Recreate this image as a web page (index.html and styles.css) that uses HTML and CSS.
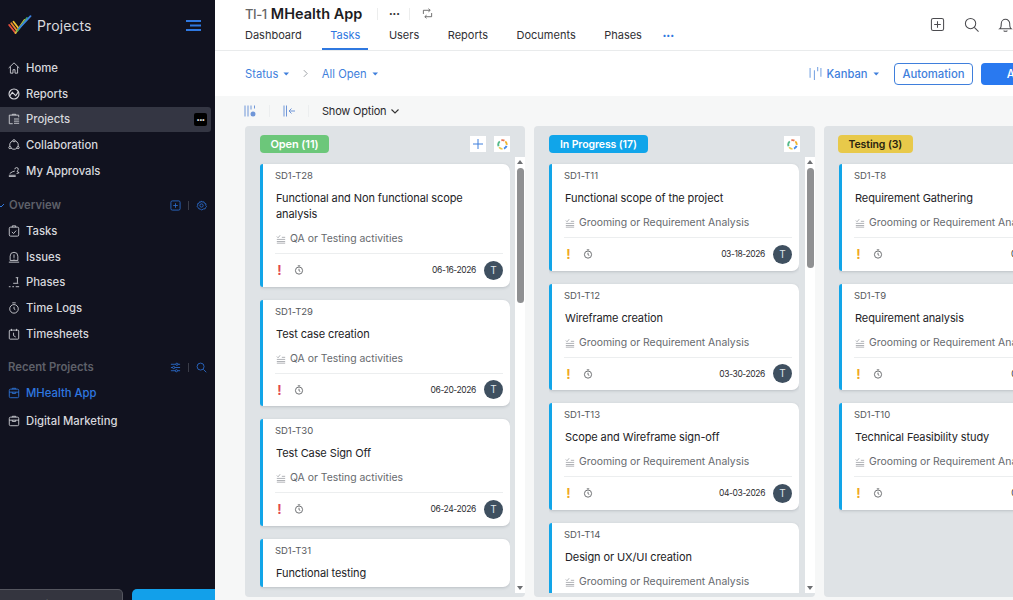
FILE: index.html
```html
<!DOCTYPE html>
<html lang="en">
<head>
<meta charset="utf-8">
<title>Projects - MHealth App</title>
<link rel="stylesheet" href="styles.css">
</head>
<body>
<svg class="sprite" width="0" height="0" aria-hidden="true">
  <symbol id="i-cat" viewBox="0 0 12 12"><path d="M1 6.500h10M1 9h10M1 11h10M1 3l1.500 1.500L5 1.500M7 4h4" fill="none" stroke="currentColor" stroke-width=".8"/></symbol>
  <symbol id="i-watch" viewBox="0 0 12 12"><circle cx="6" cy="6.700" r="4.300" fill="none" stroke="currentColor" stroke-width="1"/><path d="M4.500 1h3M6 4.500v2.400l1.500 .8" fill="none" stroke="currentColor" stroke-width="1"/></symbol>
  <symbol id="i-caret" viewBox="0 0 8 5"><path d="M0.500 .5h7L4 4.500z" fill="currentColor"/></symbol>
  <symbol id="i-ring" viewBox="0 0 14 14" fill="none" stroke-width="2.400">
    <path d="M5.500 1.700A5.500 5.500 0 0 1 9.500 2" stroke="#e8734f"/><path d="M10.600 3A5.500 5.500 0 0 1 12.400 7.500" stroke="#f0b429"/><path d="M12.200 8.800A5.500 5.500 0 0 1 8.800 12.200" stroke="#4a8de8"/><path d="M7 12.500A5.500 5.500 0 0 1 2.700 10.500" stroke="#e8c84a"/><path d="M2 9.200A5.500 5.500 0 0 1 3.500 3" stroke="#55b98a"/>
  </symbol>
</svg>
<div class="app">
  <aside class="sidebar">
    <div class="brand">
      <svg class="logo" viewBox="0 0 24 20" fill="none" stroke-width="1.800" stroke-linecap="round">
        <path d="M1.200 10l6.300 8" stroke="#e8503f"/><path d="M3.300 8.300l5.700 7.400" stroke="#ef8a2c"/><path d="M5.500 6.700l5 6.500" stroke="#f2c230"/>
        <path d="M7.500 18L16.500 5" stroke="#d9b93a"/><path d="M9.300 16L19 3" stroke="#46a95c"/><path d="M11 13.500L22.500 1.200" stroke="#3b82e0"/>
      </svg>
      <span class="brand-name">Projects</span>
      <svg class="menu-toggle" viewBox="0 0 15 11"><path d="M0 1h15M4 5.500h11M0 10h15" stroke="#2f78e0" stroke-width="2"/></svg>
    </div>
    <nav class="nav nav-main">
      <a class="nav-item"><svg class="nav-icon" viewBox="0 0 14 14"><path d="M.8 7L7 1l6.200 6M2.800 5.500v7.500h3V9h2.400v4h3V5.500" /></svg>Home</a>
      <a class="nav-item"><svg class="nav-icon" viewBox="0 0 14 14"><circle cx="7" cy="7" r="5.800" stroke-width="1.300"/><path d="M2 9.500l3-4.500 4 4 3-4.500" stroke-width="1.300"/></svg>Reports</a>
      <a class="nav-item is-current"><svg class="nav-icon" viewBox="0 0 14 14"><path d="M5 2.500V1.500h4v1M12.500 5V2.500h-11v10h4M7 7h6M7 9.500h6M7 12h6"/></svg>Projects<span class="more-badge">•••</span></a>
      <a class="nav-item"><svg class="nav-icon" viewBox="0 0 14 14"><circle cx="7" cy="7" r="5"/><circle cx="7" cy="2" r="1.300" class="dot"/><circle cx="2.200" cy="10" r="1.300" class="dot"/><circle cx="11.800" cy="10" r="1.300" class="dot"/></svg>Collaboration</a>
      <a class="nav-item"><svg class="nav-icon" viewBox="0 0 14 14"><path d="M1 12h8M1 13.500h8M2 10l3-2 3-1M8 5a2 2 0 1 1 4 0c0 1-1 1.500-1.500 2.500L13 9l-3 1"/></svg>My Approvals</a>
    </nav>
    <div class="section-head section-overview">
      <svg class="section-chevron" viewBox="0 0 6 6"><path d="M0 4l1 1 3-3" stroke="#2f78e0" fill="none" stroke-width="1"/></svg>
      <span class="section-title">Overview</span>
      <span class="section-tools">
        <svg class="tool-icon" viewBox="0 0 12 12"><rect x="1" y="1" width="10" height="10" rx="1.500"/><path d="M6 3.500v5M3.500 6h5"/></svg>
        <i class="tool-sep"></i>
        <svg class="tool-icon" viewBox="0 0 12 12"><circle cx="6" cy="6" r="1.800"/><path d="M6 1l1 1.300 1.700-.3.600 1.600 1.600.6-.3 1.800 1 1-1 1.100-.6 1.500-1.700.1L6 11l-1.200-1.200-1.600-.1-.7-1.500L1 7l1-1.200-.3-1.700 1.600-.6.600-1.500 1.700.3z"/></svg>
      </span>
    </div>
    <nav class="nav">
      <a class="nav-item"><svg class="nav-icon" viewBox="0 0 14 14"><rect x="1.500" y="2.500" width="11" height="10.500" rx="1.500"/><path d="M5 2.500V1h4v1.500M4.500 8l2 2 3-3.500"/></svg>Tasks</a>
      <a class="nav-item"><svg class="nav-icon" viewBox="0 0 14 14"><path d="M1 13h12M2.500 11V6a4.500 4.500 0 0 1 9 0v5zM7 4v4M7 9v1"/></svg>Issues</a>
      <a class="nav-item"><svg class="nav-icon" viewBox="0 0 14 14"><path d="M1 12.500h2M5 12.500h2M9 12.500h4M6 8.500h6M11 8V2M9 2h3"/></svg>Phases</a>
      <a class="nav-item"><svg class="nav-icon" viewBox="0 0 14 14"><circle cx="7" cy="8" r="5"/><path d="M5 1h4M7 5.500V8l1.500 1"/></svg>Time Logs</a>
      <a class="nav-item"><svg class="nav-icon" viewBox="0 0 14 14"><rect x="1.500" y="2.500" width="11" height="10.500" rx="1"/><path d="M4 1v2.500M10 1v2.500M6.500 5.500V9l2.500 1.500"/></svg>Timesheets</a>
    </nav>
    <div class="section-head section-recent">
      <span class="section-title">Recent Projects</span>
      <span class="section-tools">
        <svg class="tool-icon" viewBox="0 0 12 12"><path d="M1 2.500h10M1 6h10M1 9.500h10"/><circle cx="7.500" cy="2.500" r="1.200" class="tool-knob"/><circle cx="4" cy="6" r="1.200" class="tool-knob"/><circle cx="7" cy="9.500" r="1.200" class="tool-knob"/></svg>
        <i class="tool-sep"></i>
        <svg class="tool-icon" viewBox="0 0 12 12"><circle cx="5" cy="5" r="3.800"/><path d="M8 8l3.200 3.200"/></svg>
      </span>
    </div>
    <nav class="nav">
      <a class="nav-item is-active"><svg class="nav-icon" viewBox="0 0 14 14"><rect x="1.500" y="2.500" width="11" height="10" rx="1.500"/><path d="M1.500 6h11M5 6v1.500h4V6M5 2.500V1.500h4v1"/></svg>MHealth App</a>
      <a class="nav-item nav-item-last"><svg class="nav-icon" viewBox="0 0 14 14"><rect x="1.500" y="2.500" width="11" height="10" rx="1.500"/><path d="M1.500 6h11M5 6v1.500h4V6M5 2.500V1.500h4v1"/></svg>Digital Marketing</a>
    </nav>
    <div class="side-foot">
      <div class="foot-btn foot-btn-ghost">Invite Users</div>
      <div class="foot-btn foot-btn-primary">Upgrade</div>
    </div>
  </aside>

  <main class="main">
    <header class="topbar">
      <div class="topbar-left">
        <div class="title-row">
          <span class="proj-key">TI-1</span>
          <span class="proj-name">MHealth App</span>
          <i class="title-sep"></i>
          <span class="title-dots">•••</span>
          <i class="title-sep"></i>
          <svg class="title-sync" viewBox="0 0 12 12"><path d="M1.500 6.500V2.500h7M7 .8l2 1.700-2 1.700M10.500 5.500v4h-7M5 7.800l-2 1.700 2 1.700"/></svg>
        </div>
        <div class="tabs">
          <a class="tab">Dashboard</a>
          <a class="tab is-current">Tasks</a>
          <a class="tab">Users</a>
          <a class="tab">Reports</a>
          <a class="tab">Documents</a>
          <a class="tab">Phases</a>
          <span class="tab-more">•••</span>
        </div>
      </div>
      <div class="top-actions">
        <svg class="top-icon" viewBox="0 0 16 16"><rect x="1.500" y="1.500" width="13" height="13" rx="2"/><path d="M8 4.500v7M4.500 8h7"/></svg>
        <svg class="top-icon" viewBox="0 0 16 16"><circle cx="7" cy="7" r="5.500"/><path d="M11 11l4.500 4.500"/></svg>
        <svg class="top-icon" viewBox="0 0 16 16"><path d="M2 12.500c1.500-1 1.500-2.500 1.500-5.500a4.500 4.500 0 0 1 9 0c0 3 0 4.500 1.500 5.500zM6 14.500c1 1 3 1 4 0"/></svg>
      </div>
    </header>

    <div class="toolbar">
      <a class="filter">Status<svg class="caret"><use href="#i-caret"/></svg></a>
      <svg class="crumb" viewBox="0 0 6 10"><path d="M1 1l4 4-4 4" fill="none" stroke="#8b9096" stroke-width="1"/></svg>
      <a class="filter">All Open<svg class="caret"><use href="#i-caret"/></svg></a>
      <div class="toolbar-right">
        <a class="filter filter-view"><svg class="view-icon" viewBox="0 0 12 12"><path d="M1 1v9M5 3v9M8 0v4M11 1v8"/></svg>Kanban<svg class="caret"><use href="#i-caret"/></svg></a>
        <a class="btn btn-outline">Automation</a>
        <a class="btn btn-solid">Add Task</a>
      </div>
    </div>

    <div class="subbar">
      <svg class="sub-icon" viewBox="0 0 12 12"><path d="M1 .5v11M4 .5v11M7 .5v4M10.500 .5v3"/><circle cx="9" cy="9" r="2.500" class="sub-dot"/></svg>
      <i class="sub-sep"></i>
      <svg class="sub-icon" viewBox="0 0 12 12"><path d="M1 .5v11M3.500 .5v11M12 6H6M8.500 3.500L6 6l2.500 2.500"/></svg>
      <i class="sub-sep"></i>
      <a class="show-option">Show Option<svg class="chev" viewBox="0 0 8 5"><path d="M.5 .5L4 4l3.500-3.500" fill="none" stroke="#333" stroke-width="1.100"/></svg></a>
    </div>

    <section class="board">
      <div class="column">
        <div class="col-head">
          <span class="pill pill-open">Open (11)</span>
          <span class="col-tools">
            <span class="col-tool"><svg class="plus" viewBox="0 0 10 10"><path d="M5 0v10M0 5h10" stroke="#3f7fdc" stroke-width="1"/></svg></span>
            <span class="col-tool"><svg class="ring"><use href="#i-ring"/></svg></span>
          </span>
        </div>
        <div class="col-body">
          <div class="cards">
            <article class="card">
              <div class="card-id">SD1-T28</div>
              <h3 class="card-title">Functional and Non functional scope analysis</h3>
              <div class="card-cat"><svg class="cat-icon"><use href="#i-cat"/></svg>QA or Testing activities</div>
              <div class="card-foot"><span class="prio prio-high">!</span><svg class="watch"><use href="#i-watch"/></svg><span class="date">06-16-2026</span><span class="avatar">T</span></div>
            </article>
            <article class="card">
              <div class="card-id">SD1-T29</div>
              <h3 class="card-title">Test case creation</h3>
              <div class="card-cat"><svg class="cat-icon"><use href="#i-cat"/></svg>QA or Testing activities</div>
              <div class="card-foot"><span class="prio prio-high">!</span><svg class="watch"><use href="#i-watch"/></svg><span class="date">06-20-2026</span><span class="avatar">T</span></div>
            </article>
            <article class="card">
              <div class="card-id">SD1-T30</div>
              <h3 class="card-title">Test Case Sign Off</h3>
              <div class="card-cat"><svg class="cat-icon"><use href="#i-cat"/></svg>QA or Testing activities</div>
              <div class="card-foot"><span class="prio prio-high">!</span><svg class="watch"><use href="#i-watch"/></svg><span class="date">06-24-2026</span><span class="avatar">T</span></div>
            </article>
            <article class="card">
              <div class="card-id">SD1-T31</div>
              <h3 class="card-title">Functional testing</h3>
            </article>
          </div>
          <div class="scroll"><i class="arrow-up"></i><i class="thumb thumb-long"></i><i class="arrow-down"></i></div>
        </div>
      </div>

      <div class="column column-wide">
        <div class="col-head">
          <span class="pill pill-progress">In Progress (17)</span>
          <span class="col-tools">
            <span class="col-tool"><svg class="ring"><use href="#i-ring"/></svg></span>
          </span>
        </div>
        <div class="col-body">
          <div class="cards">
            <article class="card">
              <div class="card-id">SD1-T11</div>
              <h3 class="card-title">Functional scope of the project</h3>
              <div class="card-cat"><svg class="cat-icon"><use href="#i-cat"/></svg>Grooming or Requirement Analysis</div>
              <div class="card-foot"><span class="prio prio-mid">!</span><svg class="watch"><use href="#i-watch"/></svg><span class="date">03-18-2026</span><span class="avatar">T</span></div>
            </article>
            <article class="card">
              <div class="card-id">SD1-T12</div>
              <h3 class="card-title">Wireframe creation</h3>
              <div class="card-cat"><svg class="cat-icon"><use href="#i-cat"/></svg>Grooming or Requirement Analysis</div>
              <div class="card-foot"><span class="prio prio-mid">!</span><svg class="watch"><use href="#i-watch"/></svg><span class="date">03-30-2026</span><span class="avatar">T</span></div>
            </article>
            <article class="card">
              <div class="card-id">SD1-T13</div>
              <h3 class="card-title">Scope and Wireframe sign-off</h3>
              <div class="card-cat"><svg class="cat-icon"><use href="#i-cat"/></svg>Grooming or Requirement Analysis</div>
              <div class="card-foot"><span class="prio prio-mid">!</span><svg class="watch"><use href="#i-watch"/></svg><span class="date">04-03-2026</span><span class="avatar">T</span></div>
            </article>
            <article class="card">
              <div class="card-id">SD1-T14</div>
              <h3 class="card-title">Design or UX/UI creation</h3>
              <div class="card-cat"><svg class="cat-icon"><use href="#i-cat"/></svg>Grooming or Requirement Analysis</div>
            </article>
          </div>
          <div class="scroll"><i class="arrow-up"></i><i class="thumb"></i><i class="arrow-down"></i></div>
        </div>
      </div>

      <div class="column">
        <div class="col-head">
          <span class="pill pill-testing">Testing (3)</span>
        </div>
        <div class="col-body">
          <div class="cards">
            <article class="card">
              <div class="card-id">SD1-T8</div>
              <h3 class="card-title">Requirement Gathering</h3>
              <div class="card-cat"><svg class="cat-icon"><use href="#i-cat"/></svg>Grooming or Requirement Analysis</div>
              <div class="card-foot"><span class="prio prio-mid">!</span><svg class="watch"><use href="#i-watch"/></svg><span class="date">03-10-2026</span><span class="avatar">T</span></div>
            </article>
            <article class="card">
              <div class="card-id">SD1-T9</div>
              <h3 class="card-title">Requirement analysis</h3>
              <div class="card-cat"><svg class="cat-icon"><use href="#i-cat"/></svg>Grooming or Requirement Analysis</div>
              <div class="card-foot"><span class="prio prio-mid">!</span><svg class="watch"><use href="#i-watch"/></svg><span class="date">03-12-2026</span><span class="avatar">T</span></div>
            </article>
            <article class="card">
              <div class="card-id">SD1-T10</div>
              <h3 class="card-title">Technical Feasibility study</h3>
              <div class="card-cat"><svg class="cat-icon"><use href="#i-cat"/></svg>Grooming or Requirement Analysis</div>
              <div class="card-foot"><span class="prio prio-mid">!</span><svg class="watch"><use href="#i-watch"/></svg><span class="date">03-16-2026</span><span class="avatar">T</span></div>
            </article>
          </div>
        </div>
      </div>
    </section>
  </main>
</div>
</body>
</html>
```
FILE: styles.css
```css
* { box-sizing: border-box; }
html, body { margin: 0; height: 100%; overflow: hidden; }
body { font-family: Inter, "Noto Sans", sans-serif; font-size: 12px; color: #222; background: #fff; }
.sprite { position: absolute; }
a { color: inherit; text-decoration: none; }
i { display: block; font-style: normal; }

.app { display: flex; width: 1013px; height: 600px; overflow: hidden; }

/* Sidebar */
.sidebar { flex: 0 0 215px; height: 600px; background: #11121f; color: #dcdde1; display: flex; flex-direction: column; overflow: hidden; }
.brand { display: flex; align-items: center; height: 54px; padding: 0 14px 4px 8px; }
.logo { width: 24px; height: 20px; flex: none; }
.brand-name { margin-left: 5px; font-size: 14px; color: #d8d9de; letter-spacing: .1px; }
.menu-toggle { width: 15px; height: 11px; margin-left: auto; }
.nav { display: flex; flex-direction: column; }
.nav-main { margin-top: 1.500px; }
.nav-item { display: flex; align-items: center; height: 25.600px; padding-left: 8px; font-size: 11.300px; font-weight: 500; color: #d6d7dc; margin-right: 4px; border-radius: 0 3px 3px 0; position: relative; }
.nav-icon { width: 12px; height: 12px; margin-right: 6px; flex: none; fill: none; stroke: currentColor; stroke-width: 1; }
.nav-icon .dot { fill: #11121f; }
.nav-item.is-current { background: #343643; }
.more-badge { position: absolute; right: 4px; top: 6.500px; width: 13px; height: 13px; background: #000; color: #fff; border-radius: 2px; font-size: 6px; line-height: 13px; text-align: center; letter-spacing: -.5px; }
.nav-item.is-active { color: #2f78e0; }
.nav-item-last { margin-top: 2.500px; }
.section-head { display: flex; align-items: center; height: 20px; padding: 0 8px; position: relative; }
.section-overview { margin-top: 12px; margin-bottom: 3px; padding-left: 9px; }
.section-recent { margin-top: 11px; margin-bottom: 3px; }
.section-chevron { position: absolute; left: 0; top: 7px; width: 6px; height: 6px; }
.section-title { font-size: 11.300px; font-weight: 600; color: #5e6069; }
.section-tools { margin-left: auto; display: flex; align-items: center; gap: 7px; }
.tool-icon { width: 11px; height: 11px; fill: none; stroke: #2a68c4; stroke-width: 1; }
.tool-knob { fill: #11121f; }
.tool-sep { width: 1px; height: 9px; background: #3a3c48; }
.side-foot { margin-top: auto; height: 11.500px; display: flex; gap: 9px; overflow: hidden; flex: none; }
.foot-btn { flex: none; height: 32px; font-size: 11px; text-align: center; line-height: 30px; }
.foot-btn-ghost { width: 123px; background: #34353f; border: 1px solid #55565f; border-left: 0; border-radius: 0 5px 0 0; color: #ddd; }
.foot-btn-primary { width: 83px; background: #12a0ea; color: #fff; border-radius: 5px 0 0 0; }

/* Main */
.main { flex: 1 1 0; min-width: 0; display: flex; flex-direction: column; background: #f6f7f7; }
.topbar { flex: none; height: 51px; background: #fff; border-bottom: 1px solid #e9ebec; display: flex; justify-content: space-between; padding-left: 30px; }
.title-row { display: flex; align-items: center; height: 28px; padding-bottom: 1px; }
.proj-key { font-size: 13px; font-weight: 500; color: #666; letter-spacing: -.4px; }
.proj-name { margin-left: 4px; font-size: 14.500px; font-weight: 600; color: #1c1c1f; }
.title-sep { width: 1px; height: 12px; background: #eceded; margin-left: 14.500px; }
.title-dots { margin-left: 11px; margin-right: 10px; font-size: 6.500px; color: #333; width: 10px; }
.title-dots + .title-sep { margin-left: 0; }
.title-sync { width: 11px; height: 11px; margin-left: 12px; fill: none; stroke: #555; stroke-width: .9; }
.tabs { display: flex; align-items: flex-start; height: 22px; }
.tab { font-size: 11px; color: #303034; line-height: 15px; padding: 0 8px; margin-right: 12.500px; height: 22px; }
.tab:first-child { padding-left: 0; }
.tab.is-current { color: #2f78e0; border-bottom: 2px solid #2f78e0; }
.tab-more { font-size: 7px; color: #2f78e0; line-height: 15px; }
.top-actions { display: flex; gap: 19px; padding-top: 17px; flex: none; }
.top-icon { width: 15px; height: 15px; fill: none; stroke: #4b4b4f; stroke-width: 1.100; }

.toolbar { flex: none; height: 45px; background: #fff; display: flex; align-items: center; padding-left: 30px; white-space: nowrap; }
.filter { display: inline-flex; align-items: center; color: #3f7fdc; font-size: 11.200px; }
.caret { width: 6.500px; height: 4px; margin-left: 5px; color: #3f7fdc; }
.crumb { width: 5px; height: 9px; margin: 0 13.500px; }
.toolbar-right { margin-left: auto; margin-right: -70px; display: flex; align-items: center; flex: none; }
.view-icon { width: 13px; height: 13px; margin-right: 5px; fill: none; stroke: #7ba6e3; stroke-width: 1; }
.filter-view { margin-right: 15px; font-weight: 500; }
.btn { display: inline-flex; align-items: center; justify-content: center; height: 22px; border-radius: 4px; font-size: 11.300px; font-weight: 500; }
.btn-outline { width: 79px; border: 1px solid #3f7fdc; color: #3f7fdc; background: #fff; }
.btn-solid { width: 102px; margin-left: 8px; background: #2979f0; color: #fff; }

.subbar { flex: none; height: 30px; display: flex; align-items: center; padding-left: 29px; }
.sub-icon { width: 12px; height: 12px; fill: none; stroke: #6f96d8; stroke-width: 1; }
.sub-dot { fill: #6f96d8; stroke: none; }
.sub-sep { width: 1px; height: 12px; background: #eceeef; margin: 0 13px; }
.show-option { display: inline-flex; align-items: center; font-size: 11px; letter-spacing: -.2px; color: #2a2a2e; }
.chev { width: 8px; height: 5px; margin-left: 5px; }

/* Board */
.board { flex: 1 1 0; display: flex; gap: 9px; padding-left: 30px; min-height: 0; overflow: hidden; }
.column { flex: 0 0 280px; height: 471px; background: #dfe3e6; border-radius: 4px; padding: 9px 0 4px 15px; display: flex; flex-direction: column; }
.column-wide { flex-basis: 281px; }
.col-head { display: flex; align-items: center; justify-content: space-between; height: 18px; margin-right: 15px; flex: none; }
.pill { display: inline-block; height: 18px; line-height: 19px; padding: 0 10.500px; border-radius: 4px; font-size: 11px; font-weight: 600; color: #fff; letter-spacing: -.1px; }
.pill-open { background: #6cc77a; }
.pill-progress { background: #10a5ea; font-size: 10.500px; padding: 0 11px; }
.pill-testing { background: #e8c94a; color: #2a2410; margin-left: -1px; font-size: 10.500px; }
.col-tools { display: flex; gap: 8px; }
.col-tool { width: 16px; height: 16px; background: #fff; display: flex; align-items: center; justify-content: center; }
.plus { width: 10px; height: 10px; }
.ring { width: 11px; height: 11px; }
.col-body { flex: 1 1 0; min-height: 0; display: flex; margin-top: 4px; }
.cards { flex: 0 0 250px; display: flex; flex-direction: column; gap: 13px; overflow: hidden; padding-top: 7px; }
.card { flex: none; background: #fff; border-left: 3px solid #12a5e8; border-radius: 3px 7px 7px 3px; padding: 6px 7px 6.500px 12px; box-shadow: 0 1px 3px rgba(60, 70, 80, .22); }
.card-id { font-size: 9.500px; line-height: 12px; color: #55585c; letter-spacing: -.05px; }
.card-title { margin: 8px 0 0 1px; font-size: 11px; font-weight: 400; line-height: 16px; letter-spacing: -.1px; color: #222226; }
.card-cat { margin-top: 9px; display: flex; align-items: center; font-size: 10.400px; line-height: 16px; color: #66696e; padding-bottom: 6px; border-bottom: 1px solid #eceeef; white-space: nowrap; }
.cat-icon { width: 10px; height: 10px; margin: 0 4px 0 1px; color: #8a8d92; flex: none; }
.card-foot { margin-top: 6px; height: 20px; display: flex; align-items: center; white-space: nowrap; }
.prio { width: 5px; margin-left: 2px; font-size: 13px; font-weight: 700; line-height: 20px; text-align: center; }
.prio-high { color: #e2484d; }
.prio-mid { color: #f0a81e; }
.watch { width: 10px; height: 10px; margin-left: 12px; color: #55585c; }
.date { margin-left: auto; font-size: 8.500px; letter-spacing: -.4px; color: #2d2d31; }
.avatar { width: 19px; height: 19px; margin-left: 8px; border-radius: 50%; background: #3f5060; color: #dfe5ea; font-size: 10px; line-height: 19px; text-align: center; flex: none; }
.scroll { flex: 0 0 10px; margin-left: auto; background: #fff; display: flex; flex-direction: column; align-items: center; padding: 3px 0; }
.arrow-up { width: 0; height: 0; border: 3px solid transparent; border-top: 0; border-bottom: 4px solid #6d6f72; flex: none; }
.arrow-down { width: 0; height: 0; border: 3px solid transparent; border-bottom: 0; border-top: 4px solid #6d6f72; margin-top: auto; flex: none; }
.thumb { width: 7px; height: 100px; margin-top: 4px; background: #8f9092; border-radius: 4px; flex: none; }
.thumb-long { height: 135px; }
```
